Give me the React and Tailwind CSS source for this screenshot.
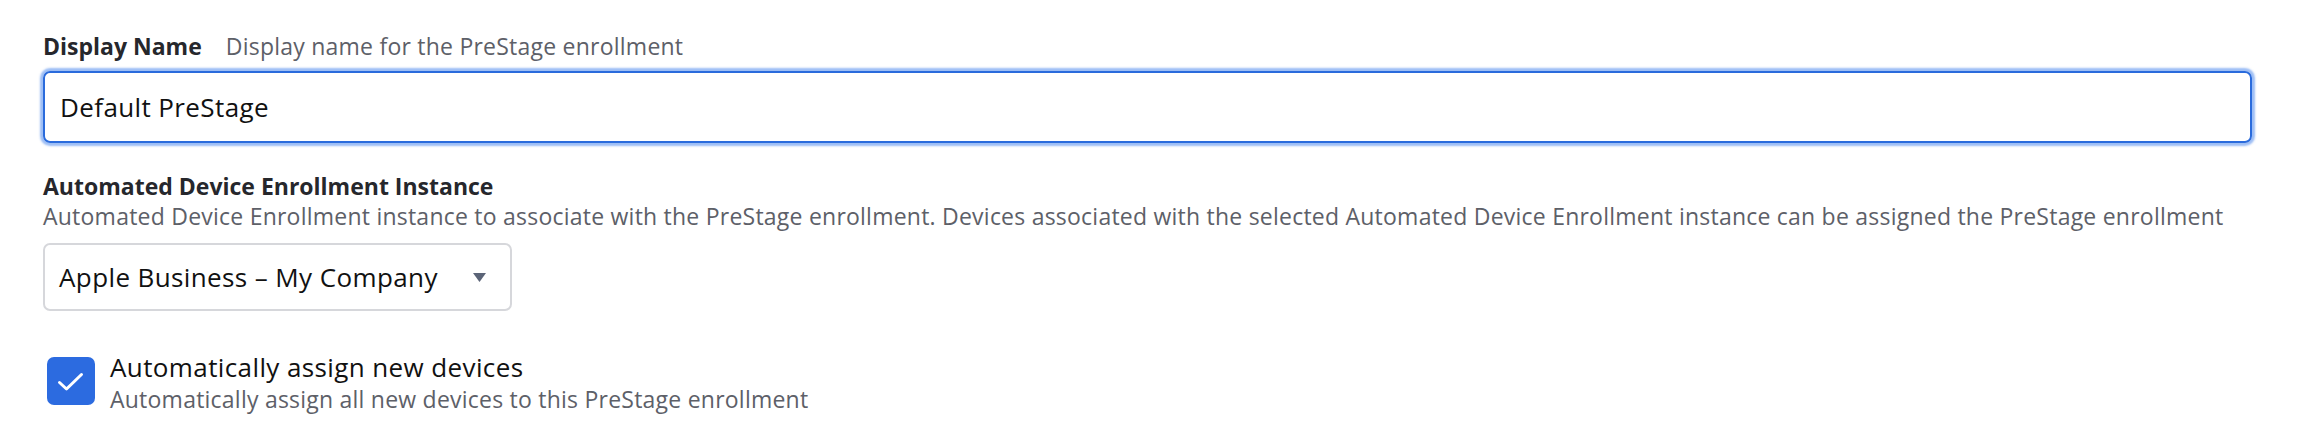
import React, { useState } from 'react';

function Caret() {
  return (
    <svg width="13" height="9" viewBox="0 0 13 9" className="shrink-0">
      <path d="M0 0 H13 L6.5 9 Z" fill="#5b6477" />
    </svg>
  );
}

function CheckMark() {
  return (
    <svg width="48" height="48" viewBox="0 0 48 48" fill="none">
      <path d="M12.5 25.5 L19.5 32 L34.5 17.5" stroke="white" strokeWidth="3" strokeLinecap="round" strokeLinejoin="round" />
    </svg>
  );
}

export default function App() {
  const [name, setName] = useState('Default PreStage');
  const [autoAssign, setAutoAssign] = useState(true);

  return (
    <div className="min-h-[440px] w-[2300px] bg-white pl-[43px] pr-[48px] pt-[31px] font-['Open_Sans','Liberation_Sans',sans-serif]">
      {/* Display name */}
      <div className="flex items-center gap-[24px] h-[30px] leading-[30px]">
        <span className="text-[23px] font-bold text-[#26272c]">Display Name</span>
        <span className="text-[23px] tracking-[0.01em] text-[#5d6068]">Display name for the PreStage enrollment</span>
      </div>
      <input
        value={name}
        onChange={(e) => setName(e.target.value)}
        className="mt-[10px] block w-full h-[72px] rounded-[7px] border-2 border-[#2a6bdc] px-[15px] text-[26px] tracking-[0.015em] text-[#111] outline-none shadow-[0_0_2px_3px_rgba(60,125,235,0.5)]"
      />

      {/* ADE instance */}
      <div className="mt-[28px] text-[23px] font-bold text-[#26272c] leading-[30px]">
        Automated Device Enrollment Instance
      </div>
      <div className="text-[23px] tracking-[0.01em] text-[#5d6068] leading-[31px]">
        Automated Device Enrollment instance to associate with the PreStage enrollment. Devices associated with the selected Automated Device Enrollment instance can be assigned the PreStage enrollment
      </div>
      <button className="mt-[11px] flex items-center justify-between w-[469px] h-[68px] rounded-[7px] border-2 border-[#d6d7db] bg-white pl-[14px] pr-[24px] text-[26px] tracking-[0.015em] text-[#111]">
        <span>Apple Business – My Company</span>
        <Caret />
      </button>

      {/* Auto assign */}
      <div className="mt-[40px] flex items-start gap-[15px]">
        <button
          onClick={() => setAutoAssign(!autoAssign)}
          className={`ml-[4px] mt-[6px] flex items-center justify-center w-[48px] h-[48px] rounded-[7px] ${autoAssign ? 'bg-[#2c6be0]' : 'bg-white border-2 border-[#d6d7db]'}`}
        >
          {autoAssign && <CheckMark />}
        </button>
        <div>
          <div className="text-[26px] tracking-[0.015em] text-[#111] leading-[32px]">Automatically assign new devices</div>
          <div className="text-[23px] tracking-[0.01em] text-[#5d6068] leading-[32px]">Automatically assign all new devices to this PreStage enrollment</div>
        </div>
      </div>
    </div>
  );
}
